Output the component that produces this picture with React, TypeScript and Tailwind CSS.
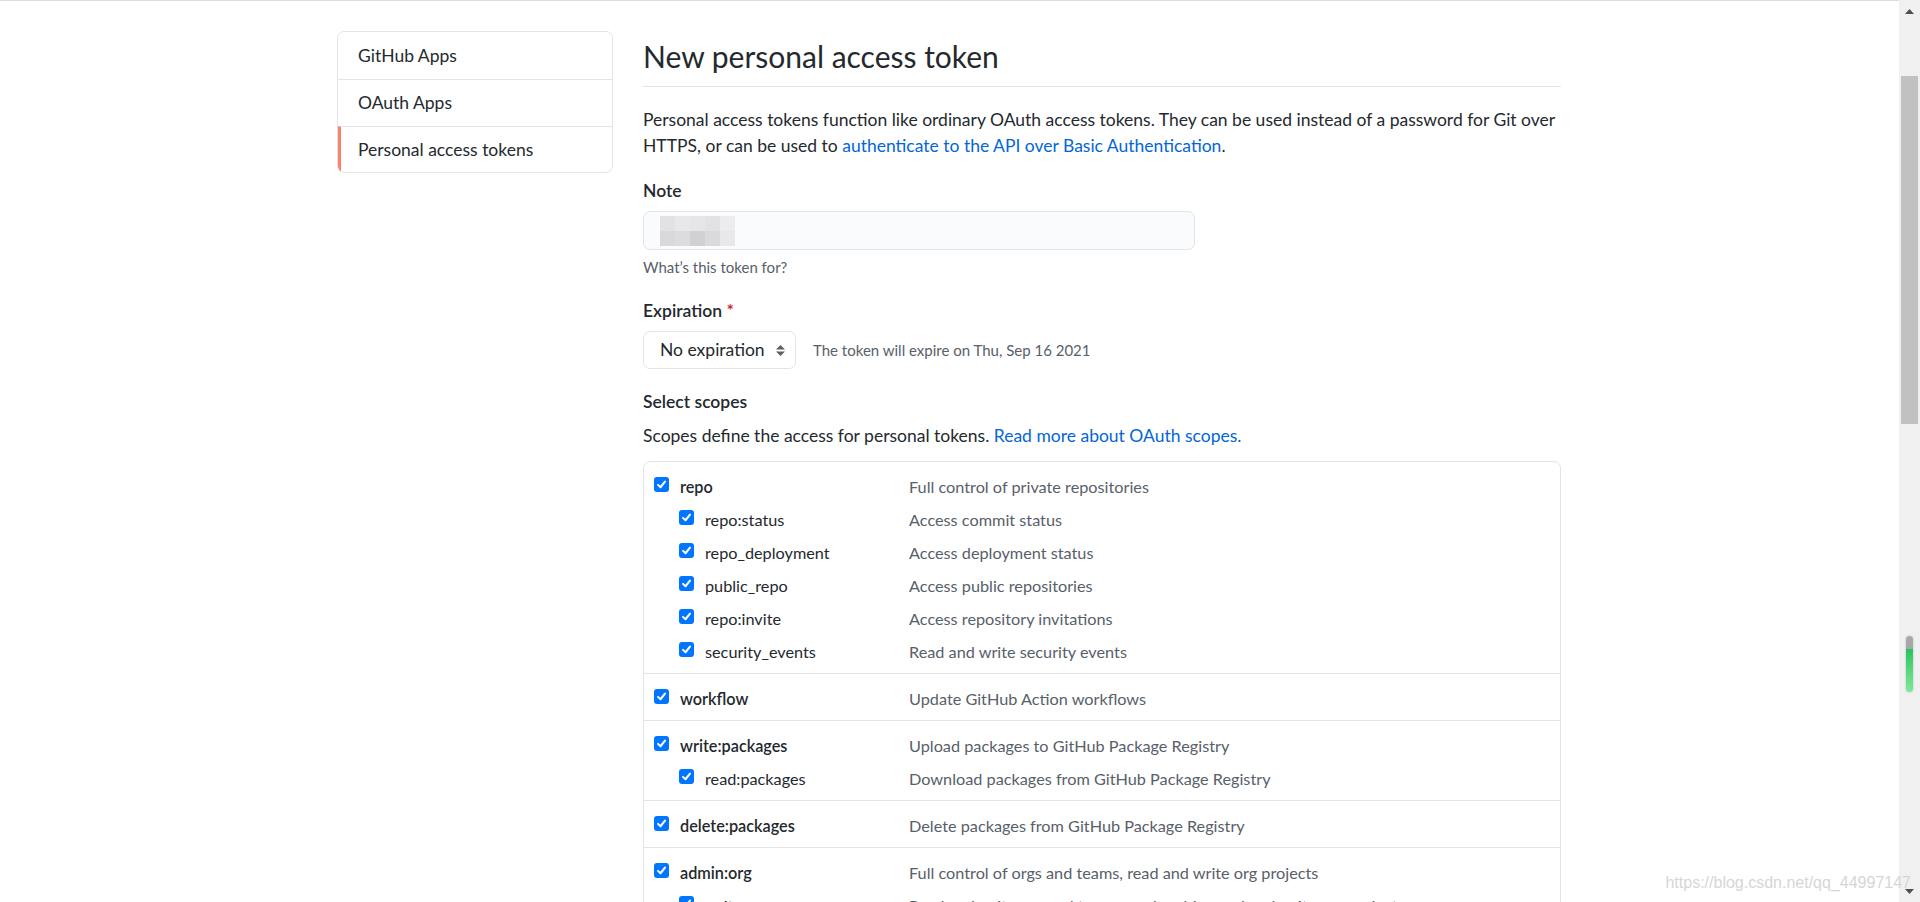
import React from 'react';

type Scope = { name: string; desc: string; sub?: boolean };

const groups: Scope[][] = [
  [
    { name: 'repo', desc: 'Full control of private repositories' },
    { name: 'repo:status', desc: 'Access commit status', sub: true },
    { name: 'repo_deployment', desc: 'Access deployment status', sub: true },
    { name: 'public_repo', desc: 'Access public repositories', sub: true },
    { name: 'repo:invite', desc: 'Access repository invitations', sub: true },
    { name: 'security_events', desc: 'Read and write security events', sub: true },
  ],
  [{ name: 'workflow', desc: 'Update GitHub Action workflows' }],
  [
    { name: 'write:packages', desc: 'Upload packages to GitHub Package Registry' },
    { name: 'read:packages', desc: 'Download packages from GitHub Package Registry', sub: true },
  ],
  [{ name: 'delete:packages', desc: 'Delete packages from GitHub Package Registry' }],
  [
    { name: 'admin:org', desc: 'Full control of orgs and teams, read and write org projects' },
    { name: 'write:org', desc: 'Read and write org and team membership, read and write org projects', sub: true },
    { name: 'read:org', desc: 'Read org and team membership, read org projects', sub: true },
  ],
];

// blurred-out note value
const mosaic = [
  ['#e2e2e4', '#e8e8ea', '#e6e6e8', '#e2e2e4', '#ececee'],
  ['#d9d9db', '#dcdcde', '#d1d1d3', '#dadadc', '#e8e8ea'],
];

const Check: React.FC = () => (
  <span className="mb-[5px] flex h-[15px] w-[15px] shrink-0 items-center justify-center rounded-[3px] bg-[#0075ff]">
    <svg width="11" height="11" viewBox="0 0 12 12" fill="none">
      <path d="M2.2 6.4 L4.9 9 L9.8 2.8" stroke="white" strokeWidth="2.2" strokeLinecap="round" strokeLinejoin="round" />
    </svg>
  </span>
);

const ScopeRow: React.FC<{ s: Scope }> = ({ s }) => (
  <div className="flex h-[33px] items-center text-[16.25px]">
    <div className={`flex w-[265px] shrink-0 items-center ${s.sub ? 'pl-[35px]' : 'pl-[10px]'}`}>
      <Check />
      <span className={`ml-[11px] text-[#24292e] ${s.sub ? 'font-normal' : 'font-semibold'}`}>{s.name}</span>
    </div>
    <span className="whitespace-nowrap text-[#586069]">{s.desc}</span>
  </div>
);

const App: React.FC = () => {
  const nav = ['GitHub Apps', 'OAuth Apps', 'Personal access tokens'];

  return (
    <div className="relative flex h-[902px] w-[1920px] overflow-hidden bg-white font-['Lato','Noto_Sans',sans-serif] text-[17.5px] leading-[26px] text-[#24292e]">
      <div className="flex-1 border-t border-[#dcdde1]">
        <div className="flex gap-[30px] pl-[337px] pt-[30px]">
          {/* sidebar */}
          <div className="h-[142px] w-[276px] shrink-0 overflow-hidden rounded-[7px] border border-[#e1e4e8]">
            {nav.map((n, i) => (
              <div
                key={n}
                className={`flex h-[47px] items-center ${i > 0 ? 'border-t border-[#e1e4e8]' : ''} ${i === 2 ? 'border-l-[3px] border-l-[#f9826c] pl-[17px]' : 'pl-[20px]'}`}
              >
                {n}
              </div>
            ))}
          </div>

          {/* main */}
          <div className="mt-[6px] w-[918px] shrink-0">
            <h1 className="border-b border-[#e1e4e8] pb-[11px] text-[30px] font-normal leading-[38px]">New personal access token</h1>
            <p className="mt-[20px]">
              Personal access tokens function like ordinary OAuth access tokens. They can be used instead of a password for Git over HTTPS, or can be used to{' '}
              <a className="text-[#0366d6]">authenticate to the API over Basic Authentication</a>.
            </p>

            <div className="mt-[19px] font-semibold">Note</div>
            <div className="mt-[7px] flex h-[39px] w-[552px] items-center rounded-[7px] border border-[#e1e4e8] bg-[#fafbfc] pl-[16px]">
              <div className="flex flex-col">
                {mosaic.map((row, r) => (
                  <div key={r} className="flex">
                    {row.map((c, k) => (
                      <span key={k} className="h-[15px] w-[15px]" style={{ background: c }} />
                    ))}
                  </div>
                ))}
              </div>
            </div>
            <div className="mt-[7px] text-[15px] leading-[20px] text-[#586069]">What’s this token for?</div>

            <div className="mt-[21px] font-semibold">
              Expiration <span className="text-[#cb2431]">*</span>
            </div>
            <div className="mt-[7px] flex items-center">
              <div className="flex h-[38px] w-[153px] items-center justify-between rounded-[7px] border border-[#e1e4e8] pl-[16px] pr-[10px]">
                <span>No expiration</span>
                <svg width="9" height="11" viewBox="0 0 9 11">
                  <path d="M4.5 0 L9 4.5 H0 Z" fill="#586069" />
                  <path d="M4.5 11 L9 6.5 H0 Z" fill="#586069" />
                </svg>
              </div>
              <span className="ml-[17px] text-[15px] text-[#586069]">The token will expire on Thu, Sep 16 2021</span>
            </div>

            <div className="mt-[20px] font-semibold">Select scopes</div>
            <p className="mt-[8px]">
              Scopes define the access for personal tokens. <a className="text-[#0366d6]">Read more about OAuth scopes.</a>
            </p>

            <div className="mt-[12px] rounded-t-[7px] border border-[#e1e4e8]">
              {groups.map((g, i) => (
                <div key={i} className={`pb-[5px] pt-[8px] ${i > 0 ? 'border-t border-[#e1e4e8]' : ''}`}>
                  {g.map((s) => (
                    <ScopeRow key={s.name} s={s} />
                  ))}
                </div>
              ))}
            </div>
          </div>
        </div>
      </div>

      {/* scrollbar */}
      <div className="relative flex w-[21px] shrink-0 flex-col items-center bg-[#f0f0f0]">
        <svg className="mt-[9px]" width="9" height="5" viewBox="0 0 9 5">
          <path d="M4.5 0 L9 5 H0 Z" fill="#505050" />
        </svg>
        <div className="mt-[62px] h-[348px] w-[17px] bg-[#c1c1c1]" />
        <div className="mt-[212px] flex h-[56px] w-[7px] flex-col overflow-hidden rounded-full shadow-[0_0_2px_rgba(0,0,0,0.25)]">
          <div className="h-[13px] bg-[#a8a8a8]" />
          <div className="flex-1 bg-gradient-to-b from-[#22c55e] to-[#7ee89a]" />
        </div>
        <svg className="mt-auto mb-[8px]" width="9" height="5" viewBox="0 0 9 5">
          <path d="M0 0 H9 L4.5 5 Z" fill="#505050" />
        </svg>
      </div>

      <div className="pointer-events-none absolute bottom-[9px] right-[9px] font-['Liberation_Sans',Arial,sans-serif] text-[16px] leading-[20px] text-[#d6d6d6]">
        https://blog.csdn.net/qq_44997147
      </div>
    </div>
  );
};

export default App;
